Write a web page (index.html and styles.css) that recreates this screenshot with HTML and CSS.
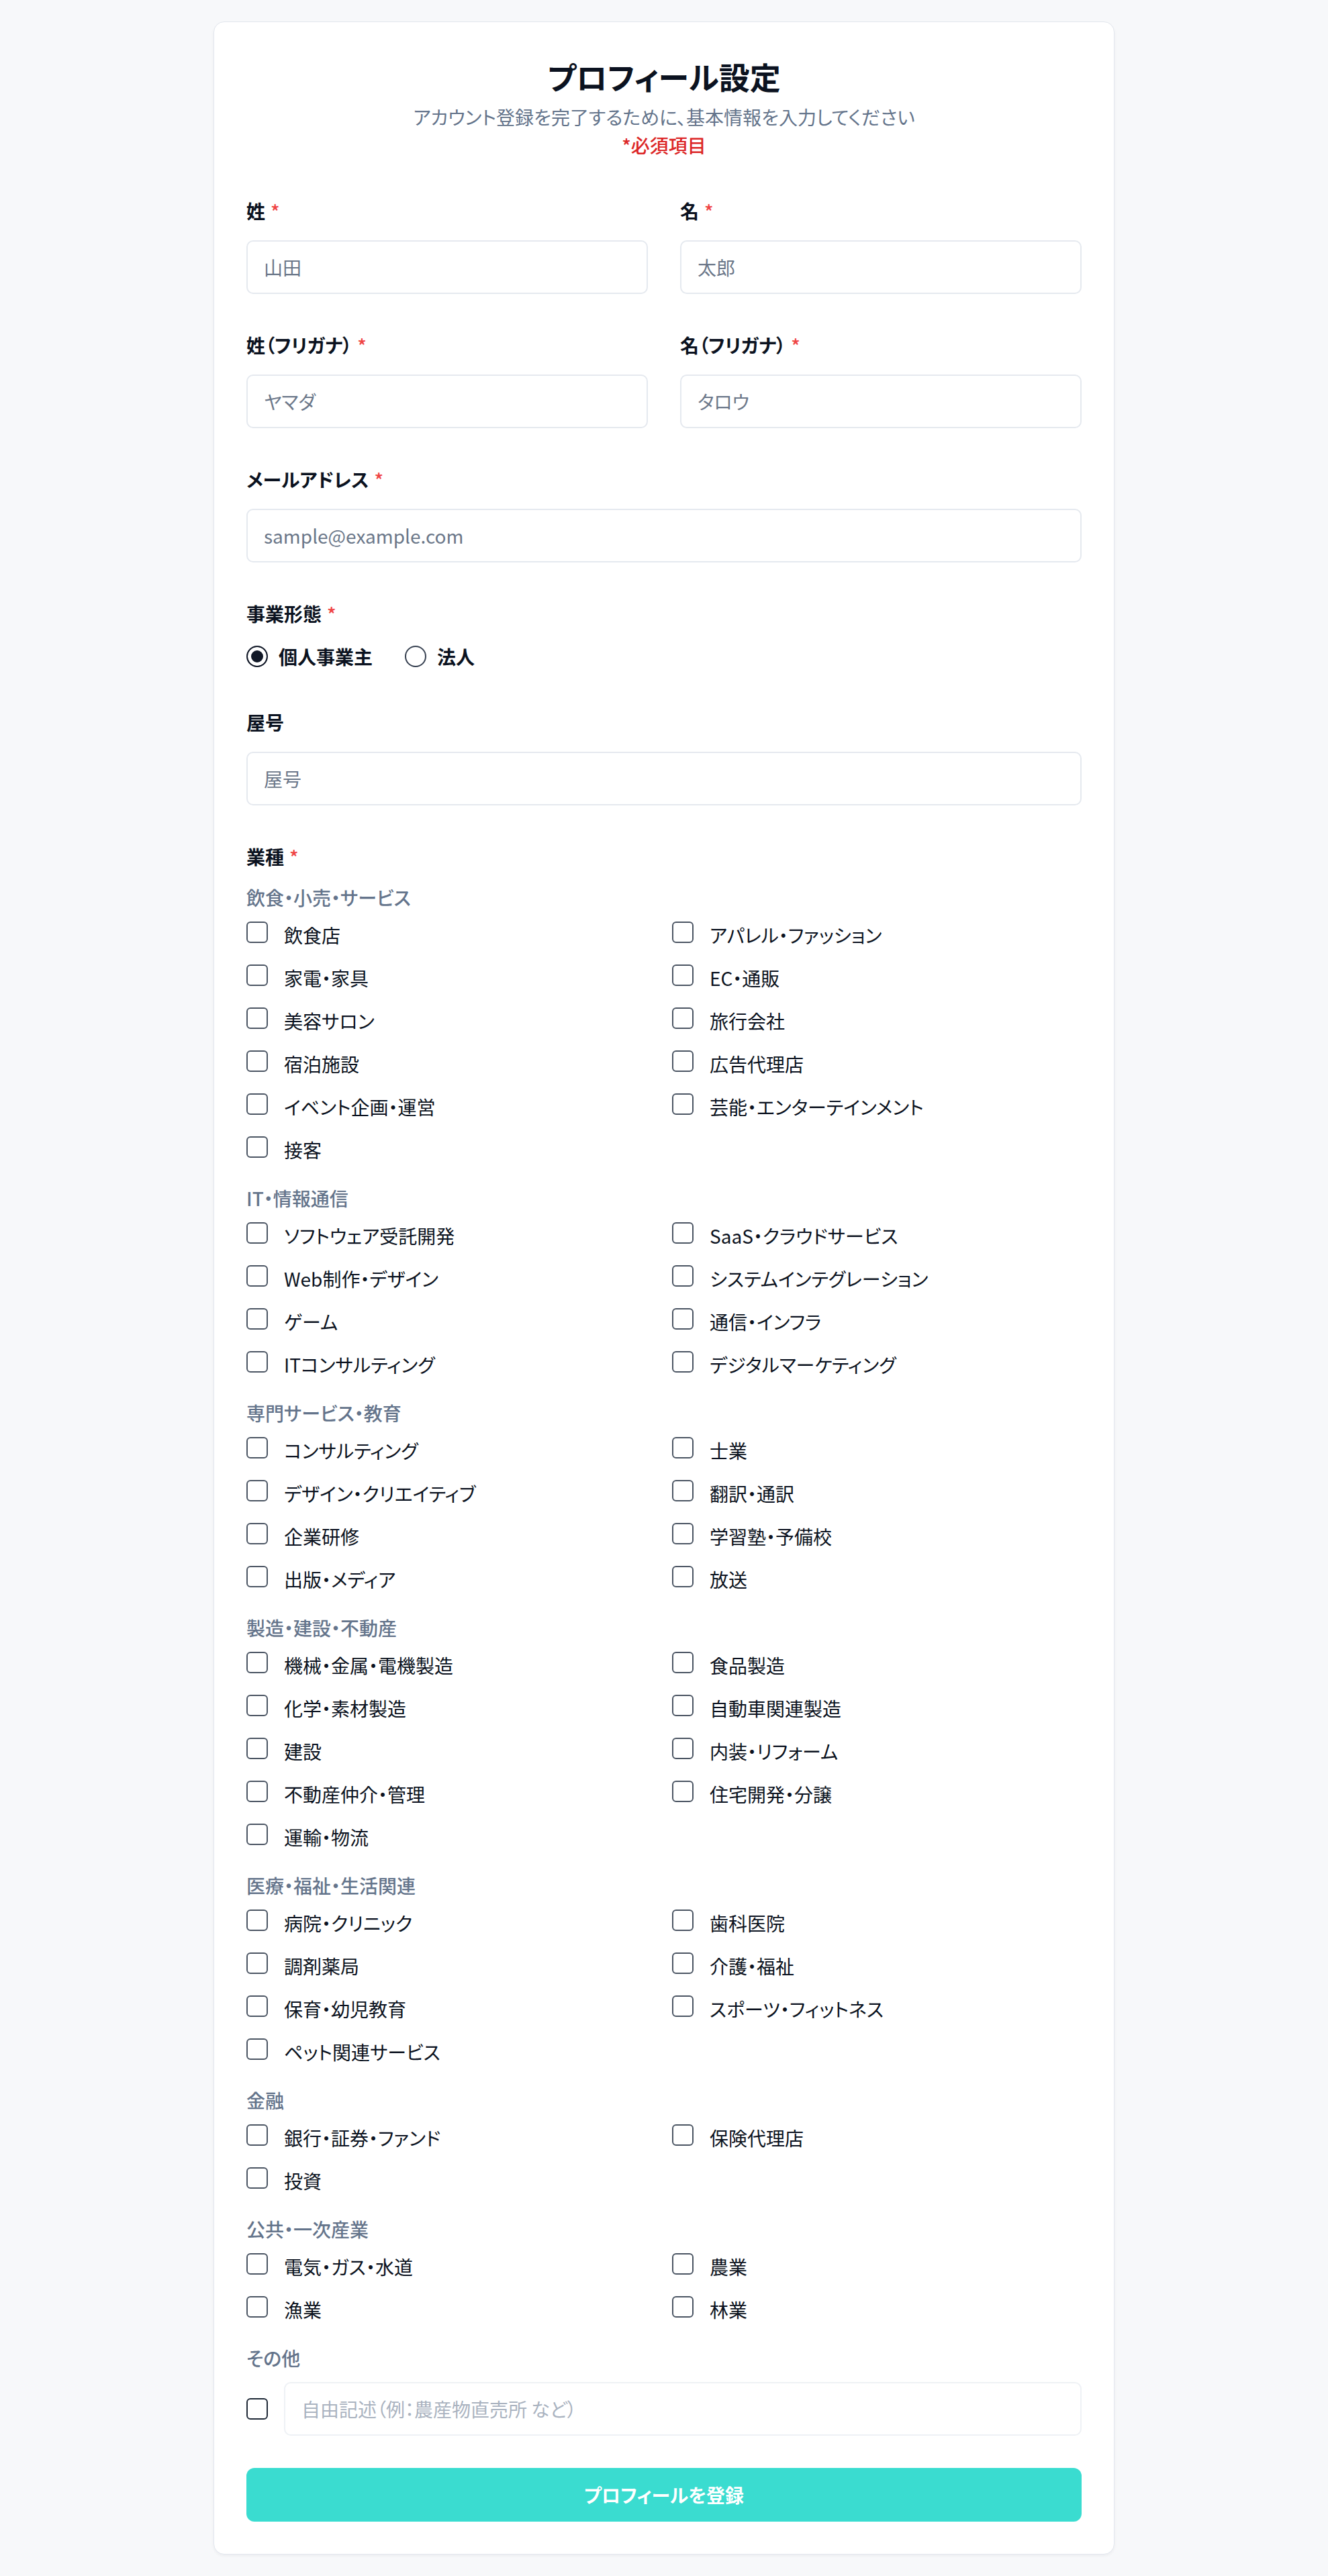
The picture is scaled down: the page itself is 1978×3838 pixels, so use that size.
FILE: index.html
```html
<!DOCTYPE html>
<html lang="ja">
<head>
<meta charset="utf-8">
<title>プロフィール設定</title>
<link rel="stylesheet" href="styles.css">
</head>
<body>
<main class="card">
  <header class="head">
    <h1 class="title">プロフィール設定</h1>
    <p class="subtitle">アカウント登録を完了するために、基本情報を入力してください</p>
    <p class="req-note">*必須項目</p>
  </header>

  <form class="form">
    <div class="row2">
      <div class="field">
        <label class="label">姓<span class="req">*</span></label>
        <input class="input" type="text" placeholder="山田">
      </div>
      <div class="field">
        <label class="label">名<span class="req">*</span></label>
        <input class="input" type="text" placeholder="太郎">
      </div>
    </div>

    <div class="row2">
      <div class="field">
        <label class="label">姓（フリガナ）<span class="req">*</span></label>
        <input class="input" type="text" placeholder="ヤマダ">
      </div>
      <div class="field">
        <label class="label">名（フリガナ）<span class="req">*</span></label>
        <input class="input" type="text" placeholder="タロウ">
      </div>
    </div>

    <div class="field">
      <label class="label">メールアドレス<span class="req">*</span></label>
      <input class="input" type="email" placeholder="sample@example.com">
    </div>

    <div class="field">
      <label class="label">事業形態<span class="req">*</span></label>
      <div class="radios">
        <label class="radio-opt"><input class="radio" type="radio" name="biz" checked><span>個人事業主</span></label>
        <label class="radio-opt"><input class="radio" type="radio" name="biz"><span>法人</span></label>
      </div>
    </div>

    <div class="field">
      <label class="label">屋号</label>
      <input class="input" type="text" placeholder="屋号">
    </div>

    <div class="field">
      <label class="label label-industry">業種<span class="req">*</span></label>
      <div class="groups">
        <section class="group">
          <h3 class="cat">飲食・小売・サービス</h3>
          <div class="grid">
            <label class="chk"><input class="box" type="checkbox"><span>飲食店</span></label>
            <label class="chk"><input class="box" type="checkbox"><span>アパレル・ファッション</span></label>
            <label class="chk"><input class="box" type="checkbox"><span>家電・家具</span></label>
            <label class="chk"><input class="box" type="checkbox"><span>EC・通販</span></label>
            <label class="chk"><input class="box" type="checkbox"><span>美容サロン</span></label>
            <label class="chk"><input class="box" type="checkbox"><span>旅行会社</span></label>
            <label class="chk"><input class="box" type="checkbox"><span>宿泊施設</span></label>
            <label class="chk"><input class="box" type="checkbox"><span>広告代理店</span></label>
            <label class="chk"><input class="box" type="checkbox"><span>イベント企画・運営</span></label>
            <label class="chk"><input class="box" type="checkbox"><span>芸能・エンターテインメント</span></label>
            <label class="chk"><input class="box" type="checkbox"><span>接客</span></label>
          </div>
        </section>
        <section class="group">
          <h3 class="cat">IT・情報通信</h3>
          <div class="grid">
            <label class="chk"><input class="box" type="checkbox"><span>ソフトウェア受託開発</span></label>
            <label class="chk"><input class="box" type="checkbox"><span>SaaS・クラウドサービス</span></label>
            <label class="chk"><input class="box" type="checkbox"><span>Web制作・デザイン</span></label>
            <label class="chk"><input class="box" type="checkbox"><span>システムインテグレーション</span></label>
            <label class="chk"><input class="box" type="checkbox"><span>ゲーム</span></label>
            <label class="chk"><input class="box" type="checkbox"><span>通信・インフラ</span></label>
            <label class="chk"><input class="box" type="checkbox"><span>ITコンサルティング</span></label>
            <label class="chk"><input class="box" type="checkbox"><span>デジタルマーケティング</span></label>
          </div>
        </section>
        <section class="group">
          <h3 class="cat">専門サービス・教育</h3>
          <div class="grid">
            <label class="chk"><input class="box" type="checkbox"><span>コンサルティング</span></label>
            <label class="chk"><input class="box" type="checkbox"><span>士業</span></label>
            <label class="chk"><input class="box" type="checkbox"><span>デザイン・クリエイティブ</span></label>
            <label class="chk"><input class="box" type="checkbox"><span>翻訳・通訳</span></label>
            <label class="chk"><input class="box" type="checkbox"><span>企業研修</span></label>
            <label class="chk"><input class="box" type="checkbox"><span>学習塾・予備校</span></label>
            <label class="chk"><input class="box" type="checkbox"><span>出版・メディア</span></label>
            <label class="chk"><input class="box" type="checkbox"><span>放送</span></label>
          </div>
        </section>
        <section class="group">
          <h3 class="cat">製造・建設・不動産</h3>
          <div class="grid">
            <label class="chk"><input class="box" type="checkbox"><span>機械・金属・電機製造</span></label>
            <label class="chk"><input class="box" type="checkbox"><span>食品製造</span></label>
            <label class="chk"><input class="box" type="checkbox"><span>化学・素材製造</span></label>
            <label class="chk"><input class="box" type="checkbox"><span>自動車関連製造</span></label>
            <label class="chk"><input class="box" type="checkbox"><span>建設</span></label>
            <label class="chk"><input class="box" type="checkbox"><span>内装・リフォーム</span></label>
            <label class="chk"><input class="box" type="checkbox"><span>不動産仲介・管理</span></label>
            <label class="chk"><input class="box" type="checkbox"><span>住宅開発・分譲</span></label>
            <label class="chk"><input class="box" type="checkbox"><span>運輸・物流</span></label>
          </div>
        </section>
        <section class="group">
          <h3 class="cat">医療・福祉・生活関連</h3>
          <div class="grid">
            <label class="chk"><input class="box" type="checkbox"><span>病院・クリニック</span></label>
            <label class="chk"><input class="box" type="checkbox"><span>歯科医院</span></label>
            <label class="chk"><input class="box" type="checkbox"><span>調剤薬局</span></label>
            <label class="chk"><input class="box" type="checkbox"><span>介護・福祉</span></label>
            <label class="chk"><input class="box" type="checkbox"><span>保育・幼児教育</span></label>
            <label class="chk"><input class="box" type="checkbox"><span>スポーツ・フィットネス</span></label>
            <label class="chk"><input class="box" type="checkbox"><span>ペット関連サービス</span></label>
          </div>
        </section>
        <section class="group">
          <h3 class="cat">金融</h3>
          <div class="grid">
            <label class="chk"><input class="box" type="checkbox"><span>銀行・証券・ファンド</span></label>
            <label class="chk"><input class="box" type="checkbox"><span>保険代理店</span></label>
            <label class="chk"><input class="box" type="checkbox"><span>投資</span></label>
          </div>
        </section>
        <section class="group">
          <h3 class="cat">公共・一次産業</h3>
          <div class="grid">
            <label class="chk"><input class="box" type="checkbox"><span>電気・ガス・水道</span></label>
            <label class="chk"><input class="box" type="checkbox"><span>農業</span></label>
            <label class="chk"><input class="box" type="checkbox"><span>漁業</span></label>
            <label class="chk"><input class="box" type="checkbox"><span>林業</span></label>
          </div>
        </section>
        <section class="group">
          <h3 class="cat">その他</h3>
          <div class="other">
            <input class="box box-dark" type="checkbox">
            <input class="input input-light" type="text" placeholder="自由記述（例：農産物直売所 など）">
          </div>
        </section>
      </div>
    </div>

    <button class="submit" type="button">プロフィールを登録</button>
  </form>
</main>
</body>
</html>
```

FILE: styles.css
```css
* { box-sizing: border-box; }

html, body {
  margin: 0;
  padding: 0;
}

body {
  background: #f7f8fa;
  font-family: "Noto Sans CJK JP", "Noto Sans", sans-serif;
  font-feature-settings: "palt";
  color: #111827;
  padding: 32px 0;
}

.card {
  width: 1342px;
  margin: 0 auto;
  background: #ffffff;
  border: 1px solid #e3e7ee;
  border-radius: 16px;
  box-shadow: 0 2px 4px rgba(15, 23, 42, 0.05);
  padding: 48px;
}

.head {
  text-align: center;
  margin-bottom: 58px;
}

.title {
  margin: 0;
  font-size: 46px;
  line-height: 64px;
  font-weight: 700;
  color: #0b1220;
}

.subtitle {
  margin: 9px 0 0;
  font-size: 28px;
  line-height: 40px;
  color: #64748b;
}

.req-note {
  margin: 2px 0 0;
  font-size: 28px;
  line-height: 40px;
  color: #dc2626;
  font-weight: 500;
}

.form {
  display: flex;
  flex-direction: column;
  gap: 56px;
}

.row2 {
  display: grid;
  grid-template-columns: 1fr 1fr;
  gap: 48px;
}

.field {
  display: flex;
  flex-direction: column;
}

.label {
  display: block;
  font-size: 28px;
  line-height: 40px;
  font-weight: 600;
  color: #0b1220;
  margin-bottom: 24px;
}

.label-industry {
  margin-bottom: 21px;
}

.req {
  color: #ef4444;
  margin-left: 8px;
  font-weight: 500;
}

.input {
  width: 100%;
  height: 80px;
  border: 2px solid #e5e9ef;
  border-radius: 10px;
  padding: 0 24px;
  font-family: inherit;
  font-feature-settings: "palt";
  font-size: 28px;
  color: #111827;
  background: #fff;
  outline: none;
}

.input::placeholder {
  color: #6b7789;
}

.input-light {
  flex: 1;
  width: auto;
  border-color: #eef1f5;
}

.input-light::placeholder {
  color: #aab3c0;
}

.radios {
  display: flex;
  gap: 48px;
  height: 44px;
  align-items: center;
  margin-top: -2px;
}

.radio-opt {
  display: flex;
  align-items: center;
  gap: 16px;
  font-size: 28px;
  line-height: 40px;
  font-weight: 600;
  color: #0b1220;
}

.radio {
  appearance: none;
  -webkit-appearance: none;
  margin: 0;
  width: 32px;
  height: 32px;
  border-radius: 50%;
  border: 2px solid #374151;
  background: #fff;
  flex-shrink: 0;
}

.radio:checked {
  border-color: #111827;
  background: #111827;
  box-shadow: inset 0 0 0 5px #fff;
}

.groups {
  display: flex;
  flex-direction: column;
  gap: 32px;
}

.cat {
  margin: 0 0 16px;
  font-size: 28px;
  line-height: 40px;
  font-weight: 500;
  color: #64748b;
}

.grid {
  display: grid;
  grid-template-columns: 1fr 1fr;
  gap: 24px;
}

.chk {
  display: flex;
  align-items: flex-start;
  gap: 24px;
  font-size: 28px;
  line-height: 40px;
  color: #0b1220;
}

.box {
  appearance: none;
  -webkit-appearance: none;
  margin: 0;
  width: 32px;
  height: 32px;
  border: 2px solid #4b5563;
  border-radius: 6px;
  background: #fff;
  flex-shrink: 0;
}

.box-dark {
  border-color: #1f2937;
}

.other {
  display: flex;
  align-items: center;
  gap: 24px;
}

.submit {
  margin-top: -8px;
  height: 80px;
  width: 100%;
  border: none;
  border-radius: 12px;
  background: #3adcd0;
  color: #ffffff;
  font-family: inherit;
  font-feature-settings: "palt";
  font-size: 28px;
  font-weight: 600;
}
```
